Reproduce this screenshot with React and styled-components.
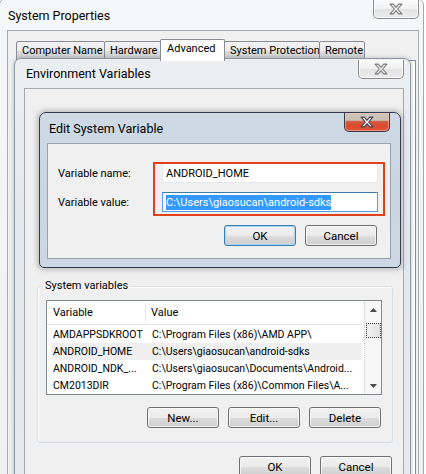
import React from 'react';
import styled, { createGlobalStyle } from 'styled-components';

const Global = createGlobalStyle`
  html, body { margin: 0; padding: 0; background: #fff; }
  body {
    font-family: Roboto, "Liberation Sans", sans-serif;
    font-size: 11px;
    color: #000;
  }
  * { box-sizing: border-box; }
`;

const Desktop = styled.div`
  position: relative;
  width: 426px;
  height: 474px;
  overflow: hidden;
  background: #fff;
`;

const Window = styled.div`
  position: absolute;
  left: ${p => p.$x}px;
  top: ${p => p.$y}px;
  width: ${p => p.$w}px;
  height: ${p => p.$h}px;
  border: 1px solid ${p => p.$border};
  border-radius: 7px 7px 5px 5px;
  background: ${p => p.$bg};
  box-shadow: ${p => p.$shadow};
  display: flex;
  flex-direction: column;
  padding: 0 ${p => p.$pr}px ${p => p.$pb || 0}px ${p => p.$pl}px;
`;

const TitleBar = styled.div`
  height: ${p => p.$h}px;
  flex: none;
  display: flex;
  align-items: flex-start;
  justify-content: space-between;
  margin-right: ${p => p.$mr || 0}px;
`;

const Title = styled.div`
  font-size: 12.5px;
  line-height: 16px;
  padding-top: ${p => p.$pt}px;
  padding-left: ${p => p.$pl}px;
  color: #000;
  white-space: nowrap;
`;

const CloseBtn = styled.div`
  width: 46px;
  height: ${p => p.$h || 19}px;
  margin-top: ${p => p.$mt || 0}px;
  border: 1px solid ${p => (p.$active ? '#3c3c48' : '#8d8d8d')};
  border-top: none;
  border-radius: 0 0 5px 5px;
  background: ${p =>
    p.$active
      ? 'linear-gradient(#d2c6bc 0%, #cabdb2 40%, #cf5a43 48%, #de4a2e 75%, #e0593e 100%)'
      : 'linear-gradient(#fbfbfb 0%, #f1f1f1 50%, #e4e4e4 52%, #ececec 100%)'};
  box-shadow: inset 0 0 0 1px ${p => (p.$active ? 'rgba(255,200,190,0.5)' : 'rgba(255,255,255,0.8)')};
  display: flex;
  align-items: center;
  justify-content: center;
`;

const XIcon = ({ fill, stroke }) => (
  <svg width="14" height="12" viewBox="0 0 13 11">
    <path
      d="M1 1 H4 L6.5 4 L9 1 H12 L8 5.5 L12 10 H9 L6.5 7 L4 10 H1 L5 5.5 Z"
      fill={fill}
      stroke={stroke}
      strokeWidth="1"
      strokeLinejoin="round"
    />
  </svg>
);

const Panel = styled.div`
  flex: 1;
  display: flex;
  flex-direction: column;
  background: #f0f0f0;
  border: 1px solid ${p => p.$border || '#a0a4a8'};
  position: relative;
  min-height: 0;
`;

/* ---- System Properties tabs ---- */
const TabStrip = styled.div`
  display: flex;
  align-items: flex-end;
  padding: 7px 0 0 8px;
  height: 29px;
  flex: none;
`;

const Tab = styled.div`
  width: ${p => p.$w}px;
  height: ${p => (p.$active ? 22 : 19)}px;
  margin-right: -1px;
  margin-bottom: ${p => (p.$active ? -1 : 0)}px;
  border: 1px solid #898c95;
  border-bottom: ${p => (p.$active ? 'none' : '1px solid #898c95')};
  border-radius: 2px 2px 0 0;
  background: ${p => (p.$active ? '#fff' : 'linear-gradient(#f3f3f3, #ebebeb 50%, #dddddd 51%, #cfcfcf)')};
  padding: 2px 0 0 ${p => (p.$active ? 6 : 5)}px;
  line-height: 14px;
  font-size: 11px;
  white-space: nowrap;
  position: relative;
  z-index: ${p => (p.$active ? 1 : 0)};
`;

const TabPage = styled.div`
  flex: 1;
  margin: 0 2px 6px 8px;
  border: 1px solid #898c95;
  background: #fff;
`;

/* ---- Environment Variables body ---- */
const EnvBody = styled.div`
  flex: 1;
  display: flex;
  flex-direction: column;
  padding-top: 190px;
`;

const Group = styled.fieldset`
  margin: 0 10px 0 12px;
  padding: 0 10px 14px 8px;
  border: 1px solid #d5dfe5;
  border-radius: 3px;
  box-shadow: inset 1px 1px 0 #fff;
  display: flex;
  flex-direction: column;
  min-width: 0;
`;

const Legend = styled.legend`
  margin-left: -3px;
  padding: 0 2px;
  font-size: 11px;
  line-height: 14px;
`;

const ListBox = styled.div`
  margin-top: 7px;
  height: 95px;
  border: 1px solid #828790;
  background: #fff;
  display: flex;
  overflow: hidden;
  font-size: 10.5px;
`;

const Grid = styled.div`
  flex: 1;
  min-width: 0;
  display: flex;
  flex-direction: column;
`;

const HeaderRow = styled.div`
  display: flex;
  height: 24px;
  flex: none;
  border-bottom: 1px solid #e5e5e5;
  margin-bottom: 1px;
  margin-right: 2px;
`;

const HeaderCell = styled.div`
  width: ${p => (p.$w ? `${p.$w}px` : 'auto')};
  flex: ${p => (p.$w ? 'none' : '1')};
  padding-left: ${p => p.$pl}px;
  border-right: ${p => (p.$w ? '1px solid #e5e5e5' : 'none')};
  margin: 2px 0;
  display: flex;
  align-items: center;
  white-space: nowrap;
  font-size: 11px;
`;

const DataRow = styled.div`
  display: flex;
  height: 17px;
  flex: none;
  align-items: center;
  margin: 0 2px 0 4px;
  padding-left: 2px;
  background: ${p => (p.$selected ? '#efefef' : 'transparent')};
  white-space: nowrap;
`;

const Cell = styled.div`
  width: ${p => (p.$w ? `${p.$w}px` : 'auto')};
  flex: ${p => (p.$w ? 'none' : '1')};
  overflow: hidden;
`;

const ScrollBar = styled.div`
  width: 17px;
  flex: none;
  background: #f7f7f7;
  border-left: 1px dotted #c8c8c8;
  display: flex;
  flex-direction: column;
  align-items: center;
`;

const Arrow = styled.div`
  height: ${p => p.$h}px;
  display: flex;
  align-items: center;
  justify-content: center;
  flex: none;
`;

const Thumb = styled.div`
  width: 15px;
  height: 15px;
  margin-top: 5px;
  border: 1px dotted #444;
  background: linear-gradient(90deg, #f2f2f2, #e2e2e2);
`;

const Spacer = styled.div`
  flex: 1;
`;

const ButtonRow = styled.div`
  display: flex;
  justify-content: flex-end;
  gap: ${p => p.$gap}px;
  margin-top: ${p => p.$mt}px;
  margin-right: ${p => p.$mr || 0}px;
  flex: none;
`;

const Button = styled.div`
  width: 72px;
  height: 21px;
  border: 1px solid ${p => (p.$default ? '#3c7fb1' : '#707070')};
  border-radius: 3px;
  background: linear-gradient(#f2f2f2 0%, #ebebeb 50%, #dddddd 51%, #cfcfcf 100%);
  box-shadow: inset 0 0 0 1px ${p => (p.$default ? '#a6d6f4' : 'rgba(255,255,255,0.7)')};
  display: flex;
  align-items: center;
  justify-content: center;
  font-size: 11.5px;
  padding-top: 1px;
`;

/* ---- Edit dialog body ---- */
const EditBody = styled.div`
  flex: 1;
  display: flex;
  flex-direction: column;
  padding: 19px 0 0 10px;
  position: relative;
`;

const FieldRow = styled.div`
  display: flex;
  align-items: center;
  height: 20px;
  margin-bottom: ${p => p.$mb || 0}px;
`;

const FieldLabel = styled.div`
  width: 104px;
  font-size: 11px;
  white-space: nowrap;
`;

const TextBox = styled.div`
  width: 216px;
  height: 20px;
  border: 1px solid ${p => (p.$focus ? '#569de5' : '#e3e9ef')};
  border-top-color: ${p => (p.$focus ? '#3d7bad' : '#abadb3')};
  background: #fff;
  padding-left: 3px;
  display: flex;
  align-items: center;
  font-size: 11px;
  white-space: nowrap;
`;

const Selected = styled.span`
  background: #3399ff;
  color: #fff;
  line-height: 15px;
`;

const Highlight = styled.div`
  position: absolute;
  left: 105px;
  top: 18px;
  width: 232px;
  height: 54px;
  border: 2px solid #e2401d;
  pointer-events: none;
`;

const rows = [
  ['AMDAPPSDKROOT', 'C:\\Program Files (x86)\\AMD APP\\'],
  ['ANDROID_HOME', 'C:\\Users\\giaosucan\\android-sdks', true],
  ['ANDROID_NDK_...', 'C:\\Users\\giaosucan\\Documents\\Android...'],
  ['CM2013DIR', 'C:\\Program Files (x86)\\Common Files\\A...'],
];

export default function App() {
  return (
    <>
      <Global />
      <Desktop>
        {/* System Properties */}
        <Window
          $x={-1}
          $y={-2}
          $w={425}
          $h={490}
          $border="#a3a8ae"
          $bg="linear-gradient(180deg, #f6f7f8 0%, #eef0f2 100%)"
          $shadow="none"
          $pl={7}
          $pr={4}
        >
          <TitleBar $h={31}>
            <Title $pt={9} $pl={1}>System Properties</Title>
            <CloseBtn $mt={1}>
              <XIcon fill="#f4f4f4" stroke="#7a7a7a" />
            </CloseBtn>
          </TitleBar>
          <Panel $border="#a8acb0">
            <TabStrip>
              <Tab $w={89}>Computer Name</Tab>
              <Tab $w={57}>Hardware</Tab>
              <Tab $w={65} $active>Advanced</Tab>
              <Tab $w={96}>System Protection</Tab>
              <Tab $w={46}>Remote</Tab>
            </TabStrip>
            <TabPage />
          </Panel>
        </Window>

        {/* Environment Variables */}
        <Window
          $x={14}
          $y={58}
          $w={397}
          $h={430}
          $border="#8e98a4"
          $bg="linear-gradient(180deg, #eceff2 0%, #e3e8ee 40%, #e6eaee 100%)"
          $shadow="0 0 4px rgba(60,70,80,0.35)"
          $pl={9}
          $pr={6}
        >
          <TitleBar $h={29}>
            <Title $pt={7} $pl={2}>Environment Variables</Title>
            <CloseBtn $mt={1} $h={19}>
              <XIcon fill="#f4f4f4" stroke="#7a7a7a" />
            </CloseBtn>
          </TitleBar>
          <Panel $border="#a3a9b0">
            <EnvBody>
              <Group>
                <Legend>System variables</Legend>
                <ListBox>
                  <Grid>
                    <HeaderRow>
                      <HeaderCell $w={99} $pl={6}>Variable</HeaderCell>
                      <HeaderCell $pl={5}>Value</HeaderCell>
                    </HeaderRow>
                    {rows.map(([k, v, sel]) => (
                      <DataRow key={k} $selected={sel}>
                        <Cell $w={99}>{k}</Cell>
                        <Cell>{v}</Cell>
                      </DataRow>
                    ))}
                  </Grid>
                  <ScrollBar>
                    <Arrow $h={17}>
                      <svg width="7" height="4" viewBox="0 0 7 4">
                        <path d="M0 4 L3.5 0 L7 4 Z" fill="#4a4a4a" />
                      </svg>
                    </Arrow>
                    <Thumb />
                    <Spacer />
                    <Arrow $h={17}>
                      <svg width="7" height="4" viewBox="0 0 7 4">
                        <path d="M0 0 L3.5 4 L7 0 Z" fill="#4a4a4a" />
                      </svg>
                    </Arrow>
                  </ScrollBar>
                </ListBox>
                <ButtonRow $gap={9} $mt={12} $mr={1}>
                  <Button>New...</Button>
                  <Button>Edit...</Button>
                  <Button>Delete</Button>
                </ButtonRow>
              </Group>
              <ButtonRow $gap={9} $mt={13} $mr={11}>
                <Button>OK</Button>
                <Button>Cancel</Button>
              </ButtonRow>
            </EnvBody>
          </Panel>
        </Window>

        {/* Edit System Variable */}
        <Window
          $x={39}
          $y={112}
          $w={362}
          $h={156}
          $border="#363a50"
          $bg="linear-gradient(180deg, #cfdae6 0%, #c8d5e2 50%, #cdd8e4 100%)"
          $shadow="0 0 5px 2px rgba(90,90,90,0.35)"
          $pl={7}
          $pr={9}
          $pb={8}
        >
          <TitleBar $h={30} $mr={1}>
            <Title $pt={8} $pl={2}>Edit System Variable</Title>
            <CloseBtn $active $h={19}>
              <XIcon fill="#ffffff" stroke="#40404a" />
            </CloseBtn>
          </TitleBar>
          <Panel $border="#98a2ad">
            <EditBody>
              <FieldRow $mb={9}>
                <FieldLabel>Variable name:</FieldLabel>
                <TextBox>ANDROID_HOME</TextBox>
              </FieldRow>
              <FieldRow>
                <FieldLabel>Variable value:</FieldLabel>
                <TextBox $focus>
                  <Selected>C:\Users\giaosucan\android-sdks</Selected>
                </TextBox>
              </FieldRow>
              <ButtonRow $gap={9} $mt={13} $mr={13}>
                <Button $default>OK</Button>
                <Button>Cancel</Button>
              </ButtonRow>
              <Highlight />
            </EditBody>
          </Panel>
        </Window>
      </Desktop>
    </>
  );
}
